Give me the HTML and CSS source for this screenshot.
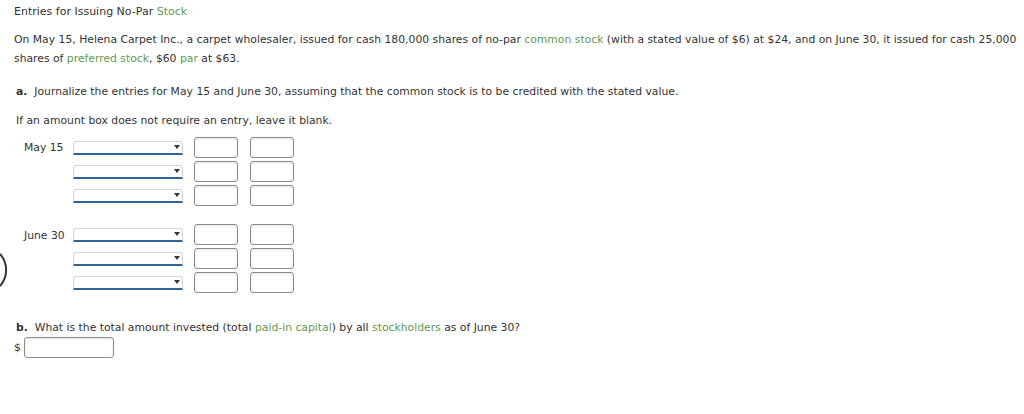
FILE: index.html
```html
<!DOCTYPE html>
<html>
<head>
<meta charset="utf-8">
<link rel="stylesheet" href="styles.css">
</head>
<body>
<div class="page">
  <div class="title">Entries for Issuing No-Par <span class="term">Stock</span></div>
  <p class="intro">On May 15, Helena Carpet Inc., a carpet wholesaler, issued for cash 180,000 shares of no-par <span class="term">common stock</span> (with a stated value of $6) at $24, and on June 30, it issued for cash 25,000 shares of <span class="term">preferred stock</span>, $60 <span class="term">par</span> at $63.</p>
  <p class="q"><b>a.</b>&nbsp; Journalize the entries for May 15 and June 30, assuming that the common stock is to be credited with the stated value.</p>
  <p class="q note">If an amount box does not require an entry, leave it blank.</p>

  <div class="entry">
    <div class="date">May 15</div>
    <div class="rows">
      <div class="row"><div class="sel"><span class="arrow"></span></div><div class="box"></div><div class="box"></div></div>
      <div class="row"><div class="sel"><span class="arrow"></span></div><div class="box"></div><div class="box"></div></div>
      <div class="row"><div class="sel"><span class="arrow"></span></div><div class="box"></div><div class="box"></div></div>
    </div>
  </div>

  <div class="entry second">
    <div class="date">June 30</div>
    <div class="rows">
      <div class="row"><div class="sel"><span class="arrow"></span></div><div class="box"></div><div class="box"></div></div>
      <div class="row"><div class="sel"><span class="arrow"></span></div><div class="box"></div><div class="box"></div></div>
      <div class="row"><div class="sel"><span class="arrow"></span></div><div class="box"></div><div class="box"></div></div>
    </div>
  </div>

  <p class="q qb"><b>b.</b>&nbsp; What is the total amount invested (total <span class="term">paid-in capital</span>) by all <span class="term">stockholders</span> as of June 30?</p>
  <div class="answer"><span class="dollar">$</span><div class="box wide"></div></div>
</div>
<svg class="edge-arc" width="10" height="40" viewBox="0 0 10 40"><path d="M0 3 A24 24 0 0 1 0 35" fill="none" stroke="#333" stroke-width="2"/></svg>
</body>
</html>
```
FILE: styles.css
```css
html, body {
  margin: 0;
  padding: 0;
  background: #fff;
}
body {
  font-family: Verdana, "DejaVu Sans", sans-serif;
  font-size: 10.8px;
  line-height: 19px;
  color: #333;
}
.page {
  padding: 2px 0 0 14px;
}
.term {
  color: #5f9a52;
}
.title {
  margin: 0;
  font-size: 11px;
}
.intro {
  margin: 9px 0 0 0;
}
.q {
  margin: 14px 0 0 2px;
}
.q b {
  font-weight: bold;
}
.note {
  margin-top: 10px;
}
.entry {
  display: flex;
  margin-top: 7px;
}
.entry.second {
  margin-top: 18px;
}
.date {
  width: 59px;
  padding: 1px 0 0 10px;
  box-sizing: border-box;
  line-height: 19px;
}
.entry.second .date {
  padding-top: 2px;
}
.rows {
  display: flex;
  flex-direction: column;
  gap: 3px;
}
.row {
  display: flex;
  align-items: center;
  height: 21px;
}
.sel {
  position: relative;
  width: 110px;
  height: 14px;
  box-sizing: border-box;
  border: 1px solid #d4d4d4;
  border-bottom: 2px solid #2f6496;
  border-radius: 3px 3px 0 0;
  margin-right: 11px;
  margin-top: 1px;
}
.arrow {
  position: absolute;
  right: 2px;
  top: 3px;
  width: 0;
  height: 0;
  border-left: 3px solid transparent;
  border-right: 3px solid transparent;
  border-top: 4px solid #333;
}
.box {
  width: 44px;
  height: 21px;
  box-sizing: border-box;
  border: 1px solid #8c8c8c;
  border-radius: 3px;
  box-shadow: inset 0 1px 2px rgba(0,0,0,0.12);
  background: #fff;
}
.row .box + .box {
  margin-left: 12px;
}
.qb {
  margin-top: 25px;
}
.answer {
  display: flex;
  align-items: center;
  height: 21px;
}
.dollar {
  width: 10px;
}
.box.wide {
  width: 90px;
}
.edge-arc {
  position: absolute;
  left: 0;
  top: 251px;
}
```
